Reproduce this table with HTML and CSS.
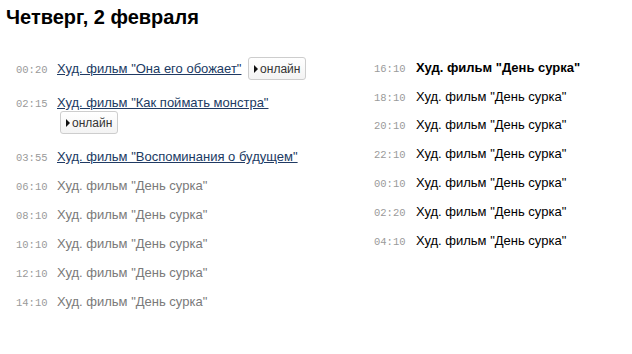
FILE: index.html
```html
<!DOCTYPE html>
<html lang="ru">
<head>
<meta charset="utf-8">
<title>Программа</title>
<link rel="stylesheet" href="styles.css">
</head>
<body>
<h1 class="day">Четверг, 2 февраля</h1>
<div class="schedule">
  <ul class="col col-left">
    <li class="row"><span class="time">00:20</span><span class="show"><a class="link" href="#">Худ. фильм "Она его обожает"</a> <span class="online"><span class="tri"></span>онлайн</span></span></li>
    <li class="row"><span class="time">02:15</span><span class="show"><a class="link" href="#">Худ. фильм "Как поймать монстра"</a> <span class="online"><span class="tri"></span>онлайн</span></span></li>
    <li class="row"><span class="time">03:55</span><span class="show"><a class="link" href="#">Худ. фильм "Воспоминания о будущем"</a></span></li>
    <li class="row past"><span class="time">06:10</span><span class="show">Худ. фильм "День сурка"</span></li>
    <li class="row past"><span class="time">08:10</span><span class="show">Худ. фильм "День сурка"</span></li>
    <li class="row past"><span class="time">10:10</span><span class="show">Худ. фильм "День сурка"</span></li>
    <li class="row past"><span class="time">12:10</span><span class="show">Худ. фильм "День сурка"</span></li>
    <li class="row past"><span class="time">14:10</span><span class="show">Худ. фильм "День сурка"</span></li>
  </ul>
  <ul class="col col-right">
    <li class="row current"><span class="time">16:10</span><span class="show">Худ. фильм "День сурка"</span></li>
    <li class="row"><span class="time">18:10</span><span class="show">Худ. фильм "День сурка"</span></li>
    <li class="row"><span class="time">20:10</span><span class="show">Худ. фильм "День сурка"</span></li>
    <li class="row"><span class="time">22:10</span><span class="show">Худ. фильм "День сурка"</span></li>
    <li class="row"><span class="time">00:10</span><span class="show">Худ. фильм "День сурка"</span></li>
    <li class="row"><span class="time">02:20</span><span class="show">Худ. фильм "День сурка"</span></li>
    <li class="row"><span class="time">04:10</span><span class="show">Худ. фильм "День сурка"</span></li>
  </ul>
</div>
</body>
</html>
```

FILE: styles.css
```css
html, body {
  margin: 0;
  padding: 0;
  background: #fff;
}

body {
  font-family: "Liberation Sans", Arial, sans-serif;
  color: #000;
}

.day {
  margin: 6px 0 0 6px;
  font-size: 20px;
  font-weight: bold;
  line-height: 23px;
}

.schedule {
  display: grid;
  grid-template-columns: 358px 1fr;
  padding: 22px 0 0 16px;
  align-items: start;
}

.col {
  list-style: none;
  margin: 0;
  padding: 0;
}

.col-right {
  margin-top: 2px;
}

.row {
  display: grid;
  grid-template-columns: 41px 1fr;
  align-items: baseline;
  padding: 6px 0;
  line-height: 17px;
  font-size: 13px;
}

.col-right .row {
  grid-template-columns: 42px 1fr;
  padding: 5.9px 0;
}

.time {
  font-family: "Liberation Mono", "Courier New", monospace;
  font-size: 10.5px;
  line-height: 10px;
  color: #9a9a9a;
}

.show {
  max-width: 270px;
}

.link {
  color: #203a63;
  text-decoration: underline;
}

.past .show {
  color: #7a7a7a;
}

.current .show {
  font-weight: bold;
}

.online {
  display: inline-flex;
  align-items: center;
  box-sizing: border-box;
  height: 23px;
  width: 58px;
  margin: 0 0 2px 3px;
  padding: 0 0 0 5px;
  vertical-align: middle;
  border: 1px solid #cdcdcd;
  border-radius: 3px;
  background: linear-gradient(#ffffff, #f3f3f3);
  font-size: 12px;
  color: #333;
  line-height: 14px;
}

.tri {
  width: 0;
  height: 0;
  border-style: solid;
  border-width: 4px 0 4px 4px;
  border-color: transparent transparent transparent #111;
  margin-right: 2px;
}
```
